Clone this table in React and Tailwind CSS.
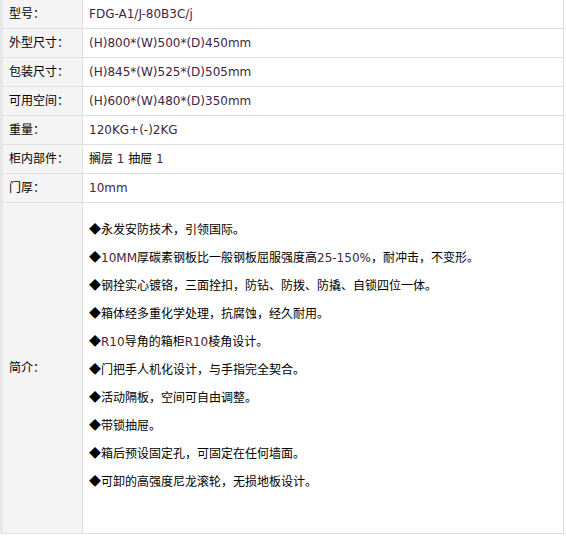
const rows = [
  ['型号：', 'FDG-A1/J-80B3C/j'],
  ['外型尺寸：', '(H)800*(W)500*(D)450mm'],
  ['包装尺寸：', '(H)845*(W)525*(D)505mm'],
  ['可用空间：', '(H)600*(W)480*(D)350mm'],
  ['重量：', '120KG+(-)2KG'],
  ['柜内部件：', '搁层 1 抽屉 1'],
  ['门厚：', '10mm'],
]

// latin bits in the intro get the purple-ish tone
const L = ({ children }) => <span className="text-[#3f2542]">{children}</span>
const D = () => <span style={{ fontFamily: '"Noto Sans CJK SC", sans-serif' }}>◆</span>

const intro = [
  <><D />永发安防技术，引领国际。</>,
  <><D /><L>10MM</L>厚碳素钢板比一般钢板屈服强度高<L>25-150%</L>，耐冲击，不变形。</>,
  <><D />钢拴实心镀铬，三面拴扣，防钻、防拨、防撬、自锁四位一体。</>,
  <><D />箱体经多重化学处理，抗腐蚀，经久耐用。</>,
  <><D /><L>R10</L>导角的箱柜<L>R10</L>棱角设计。</>,
  <><D />门把手人机化设计，与手指完全契合。</>,
  <><D />活动隔板，空间可自由调整。</>,
  <><D />带锁抽屉。</>,
  <><D />箱后预设固定孔，可固定在任何墙面。</>,
  <><D />可卸的高强度尼龙滚轮，无损地板设计。</>,
]

const font = { fontFamily: '"DejaVu Sans", "Noto Sans CJK SC", sans-serif' }

export default function App() {
  return (
    <div className="w-[566px] h-[537px] bg-white text-[12px] text-black" style={font}>
      <div className="w-[564px] border-l-[3px] border-l-[#e6e6e6] border-r border-r-[#dcdcdc]">
        {rows.map(([k, v]) => (
          <div key={k} className="flex border-b border-[#dedede]">
            <div className="w-[80px] h-[28px] flex items-center pl-[6px] bg-[#f4f4f4] border-r border-[#dedede]">{k}</div>
            <div className="flex-1 h-[28px] flex items-center pl-[6px] text-[#3f2542]">
              {/[\u4e00-\u9fff]/.test(v) ? <span className="text-black">{v.split(/(\d)/).map((p, i) => /\d/.test(p) ? <L key={i}>{p}</L> : p)}</span> : v}
            </div>
          </div>
        ))}
        <div className="flex border-b border-[#dedede]">
          <div className="w-[80px] h-[330px] flex items-center pl-[6px] bg-[#f4f4f4] border-r border-[#dedede]">简介：</div>
          <div className="flex-1 h-[330px] pt-[12px] pl-[6px]">
            {intro.map((t, i) => (
              <div key={i} className="h-[28px] leading-[28px] whitespace-nowrap">{t}</div>
            ))}
          </div>
        </div>
      </div>
    </div>
  )
}
